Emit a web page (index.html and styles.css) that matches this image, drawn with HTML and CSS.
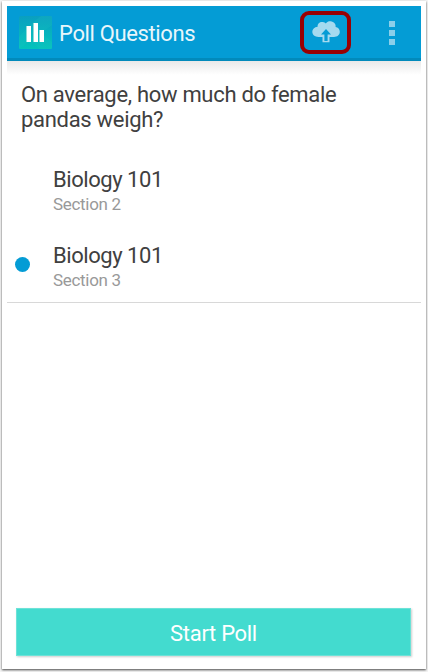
FILE: index.html
```html
<!DOCTYPE html>
<html lang="en">
<head>
    <meta charset="UTF-8">
    <meta name="viewport" content="width=device-width, initial-scale=1.0">
    <title>Poll Questions</title>
    <link rel="stylesheet" href="styles.css">
</head>
<body>
    <div class="frame">
        <!-- Action bar -->
        <header class="action-bar">
            <svg class="logo" width="33" height="33" viewBox="0 0 33 33">
                <defs>
                    <linearGradient id="logo-bg" x1="0" y1="0" x2="0" y2="1">
                        <stop offset="0" stop-color="#0a9fc0"/>
                        <stop offset="1" stop-color="#04c4bb"/>
                    </linearGradient>
                </defs>
                <rect width="33" height="33" rx="1.5" fill="url(#logo-bg)"/>
                <path d="M0 21L12 8L22 0H33V9L22 17L33 26V33H20L12 24L0 33Z" fill="#20c8c0" opacity=".18"/>
                <path d="M7 10h5v16H7zM14 7h5v19h-5zM20 14h5v12h-5z" fill="#8adcd8"/>
                <path d="M8 10h4v16H8zM15 7h4v19h-4zM21 14h4v12h-4z" fill="#fff"/>
            </svg>
            <h1>Poll Questions</h1>
            <button class="upload" aria-label="Upload">
                <svg width="28" height="22" viewBox="0 0 28 22">
                    <path d="M6.5 16C2.8 16 .3 13.7.3 10.8C.3 8.1 2.3 6.2 5.6 5.8C5.4 2.5 8 .5 10.8 1C12.2 1.1 13.2 1.7 13.8 2.4C15 .8 16.8.2 18.5.3C22 .6 24.1 3.2 23.6 6.1C26.1 6.5 27.8 8.4 27.8 10.8C27.8 14 25.3 16 22 16H17.5V21.2H10.5V16Z" fill="#a5daef"/>
                    <path d="M14 8L19 13.6H15.6V20H12.4V13.6H9Z" fill="#049cd5"/>
                </svg>
            </button>
            <button class="overflow" aria-label="More options">
                <span></span><span></span><span></span>
            </button>
        </header>

        <!-- Poll and its sections -->
        <main class="poll">
            <h2>On average, how much do female<br>pandas weigh?</h2>
            <ul class="sections">
                <li>
                    <span class="marker"></span>
                    <div>
                        <p class="course">Biology 101</p>
                        <p class="section">Section 2</p>
                    </div>
                </li>
                <li>
                    <span class="marker selected"></span>
                    <div>
                        <p class="course">Biology 101</p>
                        <p class="section">Section 3</p>
                    </div>
                </li>
            </ul>
        </main>

        <button class="start">Start Poll</button>
    </div>
</body>
</html>
```

FILE: styles.css
```css
* {
    box-sizing: border-box;
}
body {
    margin: 0;
    padding: 1px 2px 3px;
    height: 672px;
    background-color: #f4f4f4;
    font-family: Roboto, sans-serif;
    overflow: hidden;
}
h1, h2, p, ul {
    margin: 0;
    padding: 0;
    font-weight: 400;
}
button {
    border: none;
    padding: 0;
    background: none;
    font-family: inherit;
}
.frame {
    display: flex;
    flex-direction: column;
    height: 668px;
    padding: 5px;
    background-color: #fff;
    box-shadow: 0 1px 2px rgba(0, 0, 0, 0.7);
}
.action-bar {
    display: flex;
    align-items: center;
    height: 55px;
    padding: 0 26px 0 12px;
    background-color: #049cd5;
    border-bottom: 3px solid #028abb;
}
.logo {
    margin-top: 1px;
}
.action-bar h1 {
    flex: 1;
    margin-left: 7px;
    padding-top: 3px;
    color: #e9f6fb;
    font-size: 22px;
    line-height: 28px;
    letter-spacing: -0.36px;
    white-space: nowrap;
}
.upload {
    display: flex;
    align-items: center;
    justify-content: center;
    width: 51px;
    height: 43px;
    border: 4px solid #990003;
    border-radius: 9px;
}
.overflow {
    display: flex;
    flex-direction: column;
    gap: 3px;
    margin-left: 38px;
    padding-top: 1px;
}
.overflow span {
    width: 6px;
    height: 6px;
    background-color: #8bcfea;
}
.poll {
    height: 242px;
    padding-top: 21px;
    background: linear-gradient(#e9e9e9, #fff 14px);
    border-bottom: 1px solid #d8d8d8;
}
.poll h2 {
    padding-left: 14px;
    color: #404040;
    font-size: 22px;
    line-height: 25px;
    letter-spacing: -0.3px;
    white-space: nowrap;
}
.sections {
    margin-top: 21px;
    list-style: none;
}
.sections li {
    display: flex;
    align-items: center;
    height: 76px;
    padding-left: 8px;
}
.marker {
    width: 15px;
    height: 15px;
    margin: 0 23px 5px 0;
    border-radius: 50%;
}
.marker.selected {
    background-color: #049cd5;
}
.course {
    color: #404040;
    font-size: 22px;
    line-height: 27px;
    letter-spacing: -0.45px;
}
.section {
    color: #999;
    font-size: 17px;
    line-height: 23px;
    letter-spacing: -0.3px;
}
.start {
    height: 48px;
    margin: auto 10px 8px 9px;
    padding-top: 2px;
    border: 1px solid #6de2d7;
    background-color: #43dbcf;
    box-shadow: 1px 1px 2px rgba(0, 0, 0, 0.2);
    color: #fff;
    font-size: 22px;
    letter-spacing: -0.3px;
}
```
